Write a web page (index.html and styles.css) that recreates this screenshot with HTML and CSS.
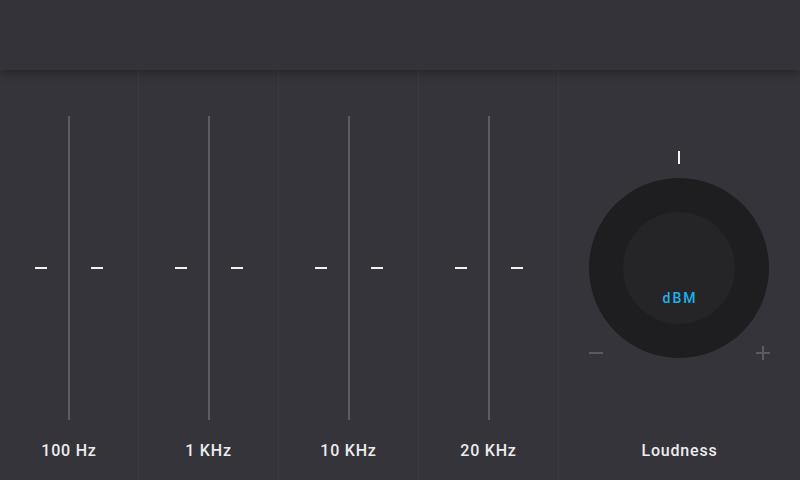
FILE: index.html
```html
<!DOCTYPE html>
<html>
<head>
<meta charset="utf-8">
<link rel="stylesheet" href="styles.css">
</head>
<body>
<div class="app">
  <header class="topbar"></header>
  <main class="panel">
    <section class="band">
      <div class="slider"><span class="tick"></span><span class="track"></span><span class="tick"></span></div>
      <div class="label">100 Hz</div>
    </section>
    <section class="band">
      <div class="slider"><span class="tick"></span><span class="track"></span><span class="tick"></span></div>
      <div class="label">1 KHz</div>
    </section>
    <section class="band">
      <div class="slider"><span class="tick"></span><span class="track"></span><span class="tick"></span></div>
      <div class="label">10 KHz</div>
    </section>
    <section class="band">
      <div class="slider"><span class="tick"></span><span class="track"></span><span class="tick"></span></div>
      <div class="label">20 KHz</div>
    </section>
    <section class="band loud">
      <div class="knob-area">
        <div class="knob">
          <span class="marker"></span>
          <div class="knob-inner"><span class="unit">dBM</span></div>
          <span class="minus"></span>
          <span class="plus"></span>
        </div>
      </div>
      <div class="label">Loudness</div>
    </section>
  </main>
</div>
</body>
</html>
```
FILE: styles.css
```css
html, body {
  margin: 0;
  padding: 0;
  background: #35343a;
}
.app {
  width: 800px;
  height: 480px;
  display: flex;
  flex-direction: column;
  overflow: hidden;
  font-family: Roboto, "Liberation Sans", sans-serif;
}
.topbar {
  height: 70px;
  flex: none;
  background: #343339;
  box-shadow: 0 2px 9px rgba(0, 0, 0, 0.35);
  position: relative;
  z-index: 1;
}
.panel {
  flex: 1;
  display: flex;
}
.band {
  width: 139px;
  border-left: 1px solid #3c3b41;
  display: flex;
  flex-direction: column;
}
.band:first-child {
  width: 138px;
  border-left: none;
}
.band.loud {
  flex: 1;
}
.slider {
  margin-top: 46px;
  height: 304px;
  display: flex;
  align-items: center;
  justify-content: center;
  gap: 21px;
}
.track {
  width: 2px;
  height: 304px;
  background: #5d5c62;
}
.tick {
  width: 12px;
  height: 2px;
  background: #f2f2f2;
}
.label {
  height: 60px;
  display: flex;
  align-items: center;
  justify-content: center;
  color: #ececee;
  font-size: 16px;
  font-weight: 500;
  letter-spacing: 0.8px;
}
.knob-area {
  margin-top: 46px;
  height: 304px;
  padding-right: 1px;
  display: flex;
  align-items: center;
  justify-content: center;
}
.knob {
  position: relative;
  width: 180px;
  height: 180px;
  border-radius: 50%;
  background: #1e1e20;
  display: flex;
  align-items: center;
  justify-content: center;
}
.knob-inner {
  width: 112px;
  height: 112px;
  border-radius: 50%;
  background: #252527;
  display: flex;
  align-items: flex-end;
  justify-content: center;
  box-sizing: border-box;
  padding-bottom: 17px;
}
.unit {
  color: #1cb2ee;
  font-size: 14px;
  font-weight: 500;
  line-height: 18px;
  letter-spacing: 2px;
  margin-right: -2px;
}
.marker {
  position: absolute;
  top: -27px;
  left: 89px;
  width: 2px;
  height: 13px;
  background: #f2f2f2;
}
.minus {
  position: absolute;
  left: 0;
  bottom: 4px;
  width: 14px;
  height: 2px;
  background: #5b5a60;
}
.plus {
  position: absolute;
  right: -1px;
  bottom: -2px;
  width: 14px;
  height: 14px;
}
.plus::before, .plus::after {
  content: "";
  position: absolute;
  background: #5b5a60;
}
.plus::before {
  left: 0;
  top: 6px;
  width: 14px;
  height: 2px;
}
.plus::after {
  left: 6px;
  top: 0;
  width: 2px;
  height: 14px;
}
```
